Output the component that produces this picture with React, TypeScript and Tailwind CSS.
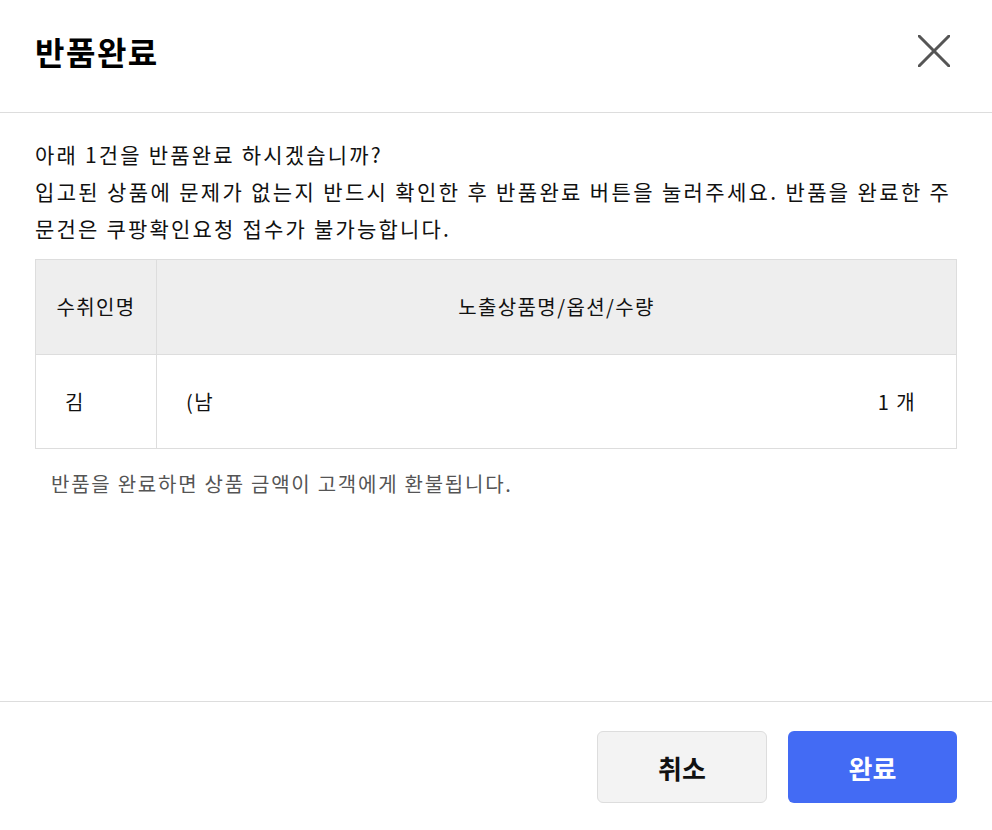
const FONT = "font-['Noto_Sans_CJK_KR','Noto_Sans',sans-serif]";

export default function App() {
  return (
    <div className={`${FONT} flex h-[830px] w-[992px] flex-col bg-white text-[#111]`}>
      {/* header */}
      <div className="flex h-[113px] shrink-0 items-center justify-between border-b border-[#dddddd] pb-[10px] pl-[35px] pr-[40px]">
        <h1 className="text-[32px] font-bold tracking-[1.5px] text-black">반품완료</h1>
        <button className="flex h-[36px] w-[36px] items-center justify-center">
          <svg width="32" height="32" viewBox="0 0 32 32" fill="none" stroke="#555555" strokeWidth="3" strokeLinecap="round">
            <path d="M1 1L31 31M31 1L1 31" />
          </svg>
        </button>
      </div>

      {/* body */}
      <div className="flex-1 px-[35px] pt-[23px]">
        <div className="text-[21px] leading-[37px] tracking-[2.2px] text-[#111]">
          <p>아래 1건을 반품완료 하시겠습니까?</p>
          <p className="whitespace-nowrap tracking-[2.35px]">입고된 상품에 문제가 없는지 반드시 확인한 후 반품완료 버튼을 눌러주세요. 반품을 완료한 주</p>
          <p>문건은 쿠팡확인요청 접수가 불가능합니다.</p>
        </div>

        <table className="mt-[12px] w-full border-collapse text-[20px] tracking-[1.4px]">
          <thead>
            <tr className="h-[95px] bg-[#eeeeee]">
              <th className="w-[121px] border border-[#dddddd] font-normal">수취인명</th>
              <th className="border border-[#dddddd] font-normal">노출상품명/옵션/수량</th>
            </tr>
          </thead>
          <tbody>
            <tr className="h-[94px]">
              <td className="border border-[#dddddd] pl-[29px]">김</td>
              <td className="border border-[#dddddd] pl-[29px] pr-[40px]">
                <div className="flex items-center justify-between">
                  <span>(남</span>
                  <span>1 개</span>
                </div>
              </td>
            </tr>
          </tbody>
        </table>

        <p className="mt-[20px] pl-[16px] text-[20px] tracking-[1.75px] text-[#555]">
          반품을 완료하면 상품 금액이 고객에게 환불됩니다.
        </p>
      </div>

      {/* footer */}
      <div className="flex h-[129px] shrink-0 items-start justify-end gap-[21px] border-t border-[#dddddd] pr-[35px] pt-[29px]">
        <button className="h-[72px] w-[170px] rounded-[6px] border border-[#dddddd] bg-[#f3f3f3] text-[26px] font-bold text-[#111]">
          취소
        </button>
        <button className="h-[72px] w-[169px] rounded-[6px] bg-[#436bf4] text-[26px] font-bold text-white">
          완료
        </button>
      </div>
    </div>
  );
}
